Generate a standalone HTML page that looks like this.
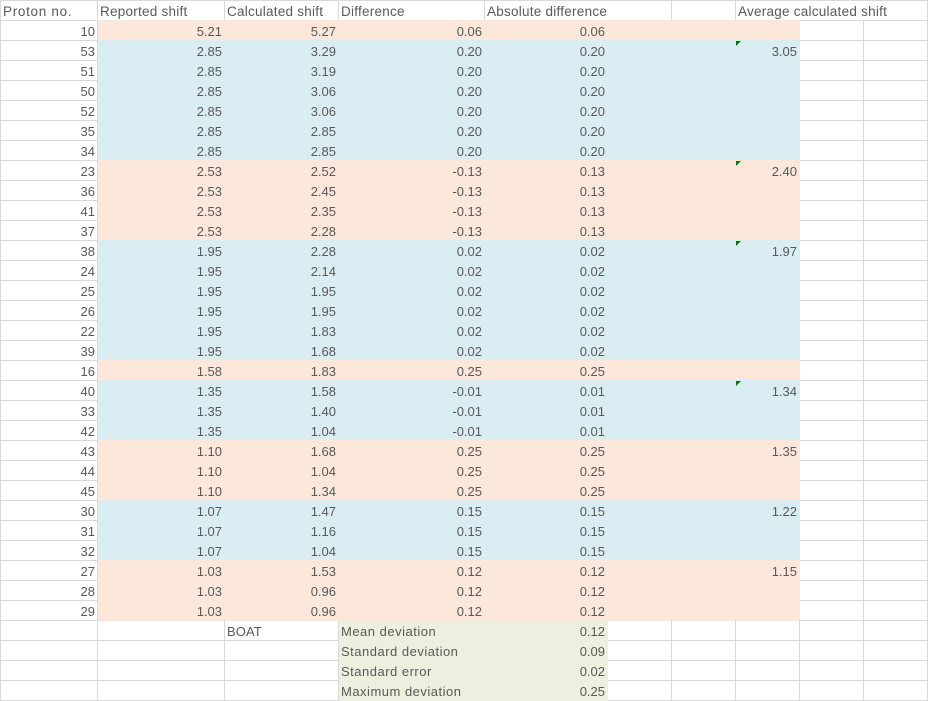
<!DOCTYPE html>
<html>
<head>
<meta charset="utf-8">
<style>
html,body{margin:0;padding:0;background:#fff}
body{width:928px;height:701px;overflow:hidden;position:relative}
table{border-collapse:separate;border-spacing:0;table-layout:fixed;width:928px;font:13px/17px "Liberation Sans",sans-serif;color:#595959}
td{box-sizing:border-box;height:20px;padding:2px 2px 0 2px;border-right:1px solid #d9d9d9;border-top:1px solid #d9d9d9;text-align:right;white-space:nowrap;overflow:hidden}
td:first-child{border-left:1px solid #d9d9d9}
tr:first-child td{text-align:left;font-size:13.5px;letter-spacing:.25px;overflow:visible}
tr:first-child td:first-child{letter-spacing:.7px}
tr.p td.c{background:#fce8db;border-color:#fce8db}
tr.b td.c{background:#daedf3;border-color:#daedf3}
td.g{background:#ebf0df;border-color:#ebf0df}
td.l{text-align:left;letter-spacing:.5px}
td.w{letter-spacing:.1px}
td.e{background:linear-gradient(#d9d9d9,#d9d9d9) 63px 0/1px 100% no-repeat}
tr.z td{border-top-color:#fce8db}
tr.z td:first-child,tr.z td.e{border-top-color:#d9d9d9}
tr.y td{height:21px;border-bottom:1px solid #d9d9d9}
tr.y td.g{border-bottom-color:#ebf0df}
.t{position:absolute;left:736px;width:0;height:0;border-top:5px solid #008000;border-right:5px solid transparent}
</style>
</head>
<body>
<table>
<colgroup><col style="width:98px"><col style="width:127px"><col style="width:114px"><col style="width:146px"><col style="width:123px"><col style="width:64px"><col style="width:64px"><col style="width:64px"><col style="width:128px"></colgroup>
<tr><td>Proton no.</td><td>Reported shift</td><td>Calculated shift</td><td>Difference</td><td colspan="2">Absolute difference</td><td></td><td colspan="2">Average calculated shift</td></tr>
<tr class="p"><td>10</td><td class="c">5.21</td><td class="c">5.27</td><td class="c">0.06</td><td class="c">0.06</td><td class="c"></td><td class="c"></td><td class="c"></td><td class="e"></td></tr>
<tr class="b"><td>53</td><td class="c">2.85</td><td class="c">3.29</td><td class="c">0.20</td><td class="c">0.20</td><td class="c"></td><td class="c"></td><td class="c">3.05</td><td class="e"></td></tr>
<tr class="b"><td>51</td><td class="c">2.85</td><td class="c">3.19</td><td class="c">0.20</td><td class="c">0.20</td><td class="c"></td><td class="c"></td><td class="c"></td><td class="e"></td></tr>
<tr class="b"><td>50</td><td class="c">2.85</td><td class="c">3.06</td><td class="c">0.20</td><td class="c">0.20</td><td class="c"></td><td class="c"></td><td class="c"></td><td class="e"></td></tr>
<tr class="b"><td>52</td><td class="c">2.85</td><td class="c">3.06</td><td class="c">0.20</td><td class="c">0.20</td><td class="c"></td><td class="c"></td><td class="c"></td><td class="e"></td></tr>
<tr class="b"><td>35</td><td class="c">2.85</td><td class="c">2.85</td><td class="c">0.20</td><td class="c">0.20</td><td class="c"></td><td class="c"></td><td class="c"></td><td class="e"></td></tr>
<tr class="b"><td>34</td><td class="c">2.85</td><td class="c">2.85</td><td class="c">0.20</td><td class="c">0.20</td><td class="c"></td><td class="c"></td><td class="c"></td><td class="e"></td></tr>
<tr class="p"><td>23</td><td class="c">2.53</td><td class="c">2.52</td><td class="c">-0.13</td><td class="c">0.13</td><td class="c"></td><td class="c"></td><td class="c">2.40</td><td class="e"></td></tr>
<tr class="p"><td>36</td><td class="c">2.53</td><td class="c">2.45</td><td class="c">-0.13</td><td class="c">0.13</td><td class="c"></td><td class="c"></td><td class="c"></td><td class="e"></td></tr>
<tr class="p"><td>41</td><td class="c">2.53</td><td class="c">2.35</td><td class="c">-0.13</td><td class="c">0.13</td><td class="c"></td><td class="c"></td><td class="c"></td><td class="e"></td></tr>
<tr class="p"><td>37</td><td class="c">2.53</td><td class="c">2.28</td><td class="c">-0.13</td><td class="c">0.13</td><td class="c"></td><td class="c"></td><td class="c"></td><td class="e"></td></tr>
<tr class="b"><td>38</td><td class="c">1.95</td><td class="c">2.28</td><td class="c">0.02</td><td class="c">0.02</td><td class="c"></td><td class="c"></td><td class="c">1.97</td><td class="e"></td></tr>
<tr class="b"><td>24</td><td class="c">1.95</td><td class="c">2.14</td><td class="c">0.02</td><td class="c">0.02</td><td class="c"></td><td class="c"></td><td class="c"></td><td class="e"></td></tr>
<tr class="b"><td>25</td><td class="c">1.95</td><td class="c">1.95</td><td class="c">0.02</td><td class="c">0.02</td><td class="c"></td><td class="c"></td><td class="c"></td><td class="e"></td></tr>
<tr class="b"><td>26</td><td class="c">1.95</td><td class="c">1.95</td><td class="c">0.02</td><td class="c">0.02</td><td class="c"></td><td class="c"></td><td class="c"></td><td class="e"></td></tr>
<tr class="b"><td>22</td><td class="c">1.95</td><td class="c">1.83</td><td class="c">0.02</td><td class="c">0.02</td><td class="c"></td><td class="c"></td><td class="c"></td><td class="e"></td></tr>
<tr class="b"><td>39</td><td class="c">1.95</td><td class="c">1.68</td><td class="c">0.02</td><td class="c">0.02</td><td class="c"></td><td class="c"></td><td class="c"></td><td class="e"></td></tr>
<tr class="p"><td>16</td><td class="c">1.58</td><td class="c">1.83</td><td class="c">0.25</td><td class="c">0.25</td><td class="c"></td><td class="c"></td><td class="c"></td><td class="e"></td></tr>
<tr class="b"><td>40</td><td class="c">1.35</td><td class="c">1.58</td><td class="c">-0.01</td><td class="c">0.01</td><td class="c"></td><td class="c"></td><td class="c">1.34</td><td class="e"></td></tr>
<tr class="b"><td>33</td><td class="c">1.35</td><td class="c">1.40</td><td class="c">-0.01</td><td class="c">0.01</td><td class="c"></td><td class="c"></td><td class="c"></td><td class="e"></td></tr>
<tr class="b"><td>42</td><td class="c">1.35</td><td class="c">1.04</td><td class="c">-0.01</td><td class="c">0.01</td><td class="c"></td><td class="c"></td><td class="c"></td><td class="e"></td></tr>
<tr class="p"><td>43</td><td class="c">1.10</td><td class="c">1.68</td><td class="c">0.25</td><td class="c">0.25</td><td class="c"></td><td class="c"></td><td class="c">1.35</td><td class="e"></td></tr>
<tr class="p"><td>44</td><td class="c">1.10</td><td class="c">1.04</td><td class="c">0.25</td><td class="c">0.25</td><td class="c"></td><td class="c"></td><td class="c"></td><td class="e"></td></tr>
<tr class="p"><td>45</td><td class="c">1.10</td><td class="c">1.34</td><td class="c">0.25</td><td class="c">0.25</td><td class="c"></td><td class="c"></td><td class="c"></td><td class="e"></td></tr>
<tr class="b"><td>30</td><td class="c">1.07</td><td class="c">1.47</td><td class="c">0.15</td><td class="c">0.15</td><td class="c"></td><td class="c"></td><td class="c">1.22</td><td class="e"></td></tr>
<tr class="b"><td>31</td><td class="c">1.07</td><td class="c">1.16</td><td class="c">0.15</td><td class="c">0.15</td><td class="c"></td><td class="c"></td><td class="c"></td><td class="e"></td></tr>
<tr class="b"><td>32</td><td class="c">1.07</td><td class="c">1.04</td><td class="c">0.15</td><td class="c">0.15</td><td class="c"></td><td class="c"></td><td class="c"></td><td class="e"></td></tr>
<tr class="p"><td>27</td><td class="c">1.03</td><td class="c">1.53</td><td class="c">0.12</td><td class="c">0.12</td><td class="c"></td><td class="c"></td><td class="c">1.15</td><td class="e"></td></tr>
<tr class="p"><td>28</td><td class="c">1.03</td><td class="c">0.96</td><td class="c">0.12</td><td class="c">0.12</td><td class="c"></td><td class="c"></td><td class="c"></td><td class="e"></td></tr>
<tr class="p"><td>29</td><td class="c">1.03</td><td class="c">0.96</td><td class="c">0.12</td><td class="c">0.12</td><td class="c"></td><td class="c"></td><td class="c"></td><td class="e"></td></tr>
<tr class="z"><td></td><td></td><td class="l w">BOAT</td><td class="g l" style="border-top-color:#fce8db">Mean deviation</td><td class="g" style="border-top-color:#fce8db">0.12</td><td></td><td></td><td></td><td class="e"></td></tr>
<tr><td></td><td></td><td></td><td class="g l">Standard deviation</td><td class="g">0.09</td><td></td><td></td><td></td><td class="e"></td></tr>
<tr><td></td><td></td><td></td><td class="g l">Standard error</td><td class="g">0.02</td><td></td><td></td><td></td><td class="e"></td></tr>
<tr class="y"><td></td><td></td><td></td><td class="g l">Maximum deviation</td><td class="g">0.25</td><td></td><td></td><td></td><td class="e"></td></tr>
</table>
<div class="t" style="top:41px"></div>
<div class="t" style="top:161px"></div>
<div class="t" style="top:241px"></div>
<div class="t" style="top:381px"></div>
</body>
</html>
